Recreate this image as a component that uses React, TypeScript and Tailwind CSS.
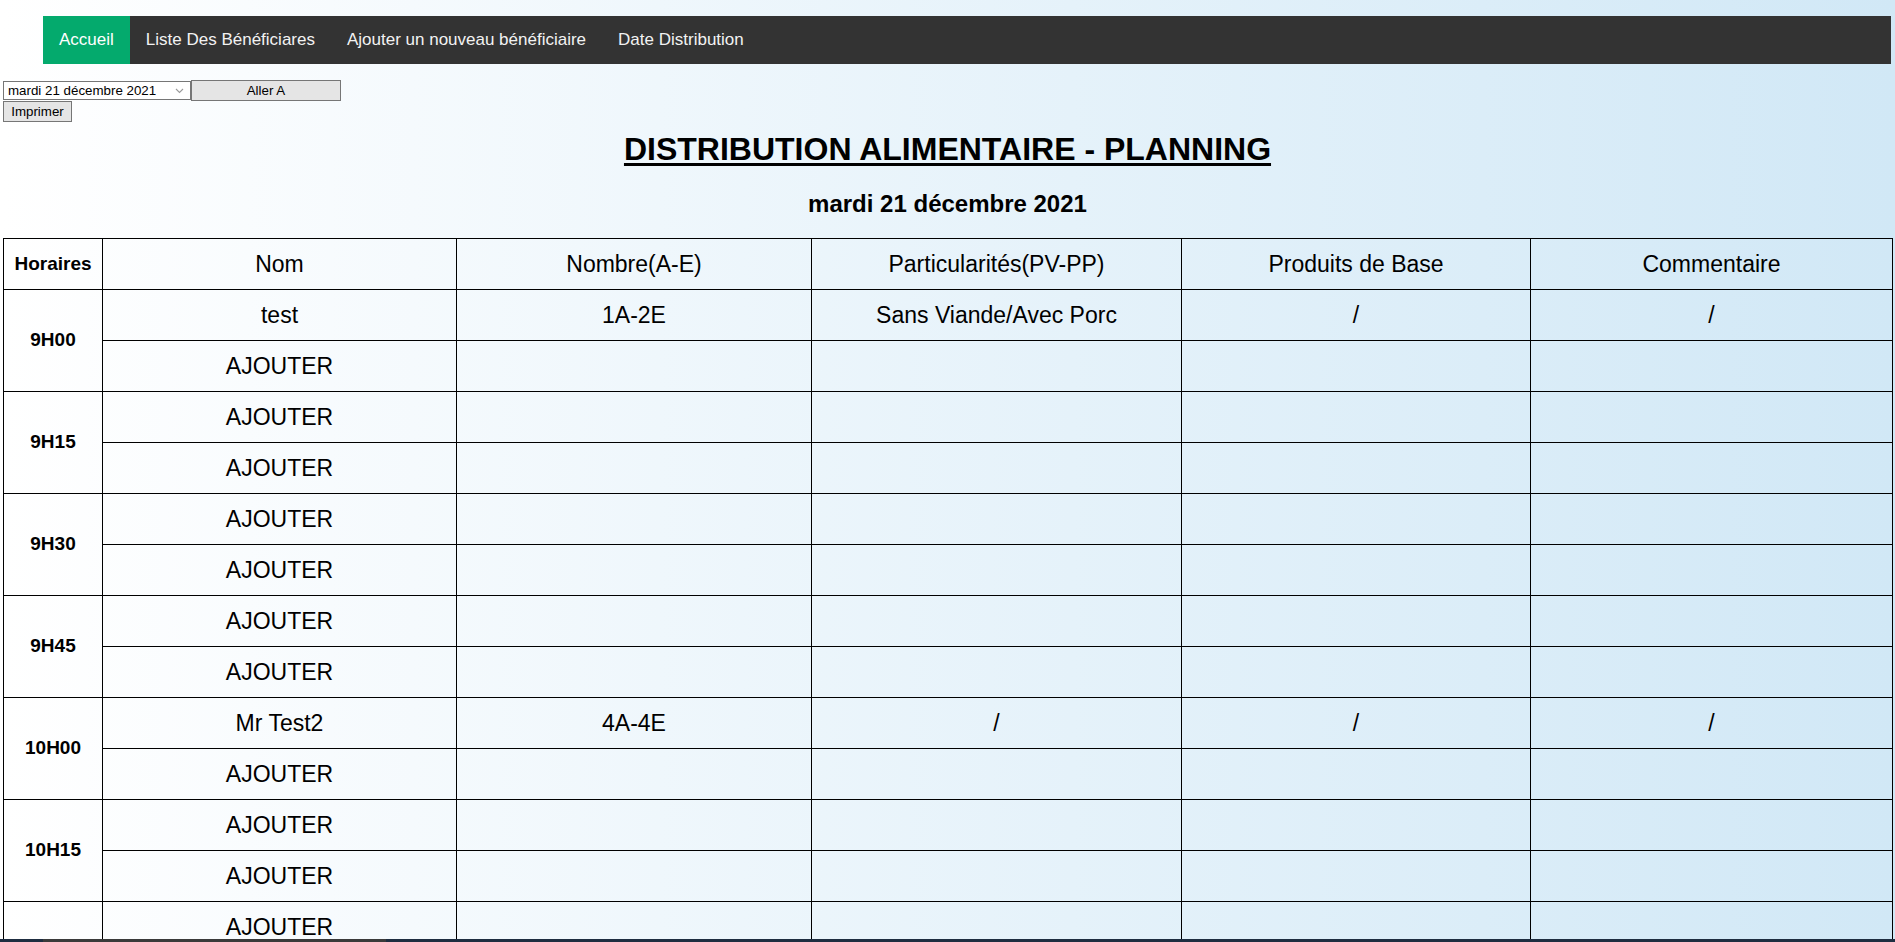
import { useState } from "react";

type Slot = {
    time: string;
    rows: string[][];// each row: nom, nombre, particularites, produits, commentaire
};

const EMPTY = ["AJOUTER", "", "", "", ""];

const SLOTS: Slot[] = [
    { time: "9H00", rows: [["test", "1A-2E", "Sans Viande/Avec Porc", "/", "/"], EMPTY] },
    { time: "9H15", rows: [EMPTY, EMPTY] },
    { time: "9H30", rows: [EMPTY, EMPTY] },
    { time: "9H45", rows: [EMPTY, EMPTY] },
    { time: "10H00", rows: [["Mr Test2", "4A-4E", "/", "/", "/"], EMPTY] },
    { time: "10H15", rows: [EMPTY, EMPTY] },
    { time: "10H30", rows: [EMPTY, EMPTY] },
    { time: "10H45", rows: [EMPTY, EMPTY] },
    { time: "11H00", rows: [EMPTY, EMPTY] },
];

const NAV = ["Accueil", "Liste Des Bénéficiares", "Ajouter un nouveau bénéficiaire", "Date Distribution"];

const COLUMNS = ["Nom", "Nombre(A-E)", "Particularités(PV-PP)", "Produits de Base", "Commentaire"];

const App = () => {
    const [date, setDate] = useState("2021-12-21");

    return (
        <div className="min-h-screen bg-linear-to-r from-[#ffffff] to-[#d1e8f6] font-['Liberation_Sans',Arial,sans-serif] text-black pt-[16px] pb-[40px]">
            {/* top nav */}
            <nav className="ml-[43px] mr-[4px] flex bg-[#333333]">
                {NAV.map((item, i) => (
                    <a
                        key={item}
                        href="#"
                        className={`px-[16px] py-[14px] text-[17px] leading-[20px] text-[#f2f2f2] ${i === 0 ? "bg-[#04aa6d] text-white" : ""}`}
                    >
                        {item}
                    </a>
                ))}
            </nav>

            {/* date picker + buttons */}
            <div className="mt-[16px] ml-[3px] flex items-center">
                <div className="relative h-[19px] w-[188px]">
                    <select
                        value={date}
                        onChange={(e) => setDate(e.target.value)}
                        className="block h-[19px] w-full appearance-none border border-[#767676] bg-white py-0 pl-[4px] text-[13.33px] leading-[15px] text-black outline-none"
                    >
                        <option value="2021-12-21">mardi 21 décembre 2021</option>
                        <option value="2021-12-28">mardi 28 décembre 2021</option>
                    </select>
                    <svg
                        className="pointer-events-none absolute right-[7px] top-[7px]"
                        width="9"
                        height="6"
                        viewBox="0 0 9 6"
                        fill="none"
                    >
                        <path d="M1 1l3.5 3.5L8 1" stroke="#9a9a9a" strokeWidth="1.1" />
                    </svg>
                </div>
                <button className="h-[21px] w-[150px] border border-[#767676] bg-[#e5e5e5] text-[13.33px] leading-[17px] text-black">
                    Aller A
                </button>
            </div>
            <button className="ml-[3px] block h-[21px] w-[69px] border border-[#767676] bg-[#e5e5e5] text-[13.33px] leading-[17px] text-black">
                Imprimer
            </button>

            <h1 className="mt-[9px] text-center text-[32px] font-bold leading-[37px] underline underline-offset-[3px]">
                DISTRIBUTION ALIMENTAIRE - PLANNING
            </h1>
            <h2 className="mt-[22px] text-center text-[24px] font-bold leading-[28px]">
                mardi 21 décembre 2021
            </h2>

            <table className="mt-[20px] ml-[3px] w-[1889px] table-fixed border-collapse">
                <colgroup>
                    <col className="w-[99px]" />
                    <col className="w-[354px]" />
                    <col className="w-[355px]" />
                    <col className="w-[370px]" />
                    <col className="w-[349px]" />
                    <col className="w-[362px]" />
                </colgroup>
                <thead>
                    <tr className="h-[51px]">
                        <th className="border border-black text-[19px] font-bold">Horaires</th>
                        {COLUMNS.map((c) => (
                            <th key={c} className="border border-black text-[23px] font-normal">
                                {c}
                            </th>
                        ))}
                    </tr>
                </thead>
                <tbody>
                    {SLOTS.map((slot) =>
                        slot.rows.map((row, ri) => (
                            <tr key={slot.time + ri} className="h-[51px]">
                                {ri === 0 && (
                                    <td rowSpan={2} className="border border-black text-center text-[19px] font-bold">
                                        {slot.time}
                                    </td>
                                )}
                                {row.map((cell, ci) => (
                                    <td key={ci} className="border border-black text-center text-[23px]">
                                        {cell}
                                    </td>
                                ))}
                            </tr>
                        ))
                    )}
                </tbody>
            </table>

            {/* taskbar strip at bottom of the capture */}
            <div className="fixed bottom-0 left-0 right-0 flex h-[3px] bg-[#1e2d40]">
                <div className="ml-[43px] w-[343px] bg-[#3a3a3a]" />
            </div>
        </div>
    );
};

export default App;
